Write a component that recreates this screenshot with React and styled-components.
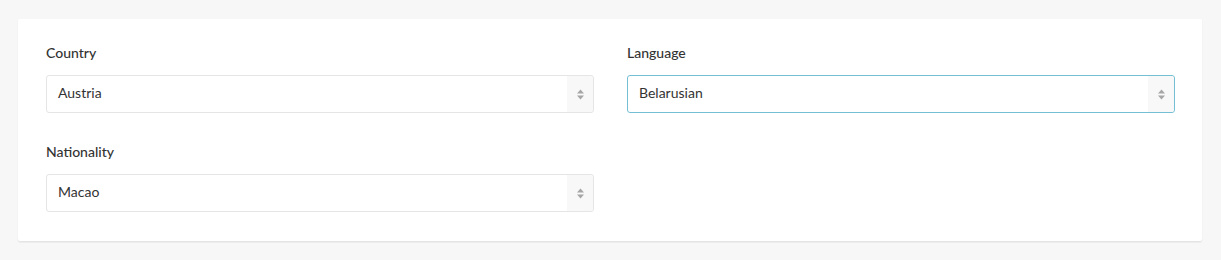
import React, { useState } from "react";
import styled, { createGlobalStyle } from "styled-components";

const GlobalStyle = createGlobalStyle`
  html, body {
    margin: 0;
    padding: 0;
    background: #f7f7f7;
    font-family: Lato, "Open Sans", sans-serif;
  }
`;

const Page = styled.div`
  padding: 19px 19px 19px 18px;
`;

const Card = styled.div`
  background: #fff;
  border-radius: 2px;
  box-shadow: 0 1px 2px rgba(0, 0, 0, 0.06), 0 2px 1px rgba(0, 0, 0, 0.03);
  padding: 24px 27px 29px 28px;
  display: grid;
  grid-template-columns: 548px 548px;
  column-gap: 33px;
  row-gap: 29px;
`;

const Field = styled.div`
  display: flex;
  flex-direction: column;
`;

const Label = styled.label`
  font-size: 14px;
  font-weight: 500;
  color: #333;
  line-height: 20px;
  margin-bottom: 12px;
`;

const SelectBox = styled.div`
  position: relative;
  height: 38px;
  box-sizing: border-box;
  border: 1px solid ${({ focused }) => (focused ? "#74bfd4" : "#e5e5e5")};
  border-radius: 3px;
  background: #fff;
  display: flex;
  align-items: center;
  padding-left: 11px;
  font-size: 14px;
  color: #333;
`;

const Value = styled.span`
  flex: 1;
  padding-bottom: 3px;
`;

const ArrowBox = styled.div`
  width: 26px;
  align-self: stretch;
  background: #f8f8f8;
  display: flex;
  align-items: center;
  justify-content: center;
  border-radius: 0 3px 3px 0;
`;

const Arrows = () => (
  <svg width="9" height="13" viewBox="0 0 9 13">
    <path d="M4.5 1.5 L8 5.5 L1 5.5 Z" fill="#a6a6a6" />
    <path d="M4.5 11.5 L8 7.5 L1 7.5 Z" fill="#a6a6a6" />
  </svg>
);

const Select = ({ value, focused }) => (
  <SelectBox focused={focused}>
    <Value>{value}</Value>
    <ArrowBox>
      <Arrows />
    </ArrowBox>
  </SelectBox>
);

export default function App() {
  const [fields] = useState([
    { label: "Country", value: "Austria" },
    { label: "Language", value: "Belarusian", focused: true },
    { label: "Nationality", value: "Macao" },
  ]);

  return (
    <Page>
      <GlobalStyle />
      <Card>
        {fields.map((f) => (
          <Field key={f.label}>
            <Label>{f.label}</Label>
            <Select value={f.value} focused={f.focused} />
          </Field>
        ))}
      </Card>
    </Page>
  );
}
